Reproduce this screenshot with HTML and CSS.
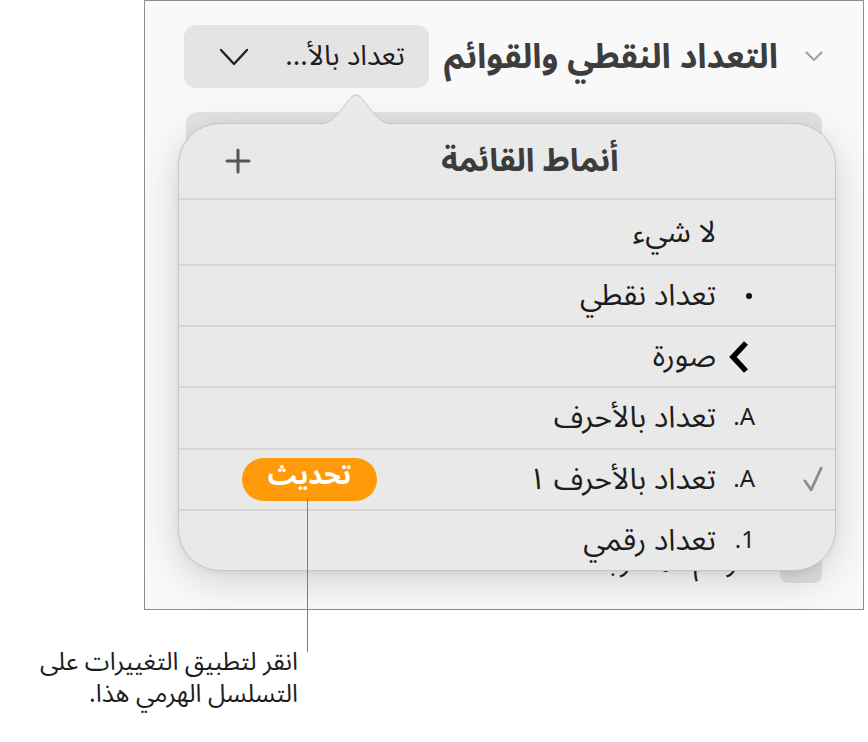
FILE: index.html
```html
<!DOCTYPE html>
<html lang="ar">
<head>
  <meta charset="UTF-8" />
  <title>أنماط القائمة</title>
  <link rel="stylesheet" href="styles.css">
</head>
<body>
  <div class="stage">
    <div class="frame">
      <div class="bar">
        <svg class="disclosure" viewBox="0 0 18 11"><polyline points="1.5,1.5 9,9 16.5,1.5" /></svg>
        <h2 class="bar-title">التعداد النقطي والقوائم</h2>
        <button class="style-pop">
          <span>تعداد بالأ...</span>
          <svg viewBox="0 0 30 18"><polyline points="2,2 15,16 28,2" /></svg>
        </button>
      </div>
      <div class="list-box"></div>
      <div class="tier-row">
        <span class="tier-box"></span>
        <span class="tier-label">الأرقام المتدرجة</span>
      </div>

      <div class="popover">
        <svg class="popover-arrow" viewBox="0 0 72 31"><path d="M0 30 C 18 30 27 1 36 1 C 45 1 54 30 72 30" /></svg>
        <div class="pop-head">
          <span></span>
          <span class="pop-title">أنماط القائمة</span>
          <svg class="add" viewBox="0 0 26 26"><path d="M13 2 V24 M2 13 H24" /></svg>
        </div>
        <ul class="styles">
          <li><span class="check"></span><span class="mark"></span><span class="name">لا شيء</span></li>
          <li><span class="check"></span><span class="mark"><i class="dot"></i></span><span class="name">تعداد نقطي</span></li>
          <li><span class="check"></span><span class="mark"><svg class="pic" viewBox="0 0 22 34"><polyline points="18,3 5,17 18,31" /></svg></span><span class="name">صورة</span></li>
          <li><span class="check"></span><span class="mark">A.</span><span class="name">تعداد بالأحرف</span></li>
          <li>
            <span class="check"><svg viewBox="0 0 22 28"><polyline points="2,16 9,26 20,2" /></svg></span>
            <span class="mark">A.</span><span class="name">تعداد بالأحرف ١</span>
            <button class="update">تحديث</button>
          </li>
          <li><span class="check"></span><span class="mark">1.</span><span class="name">تعداد رقمي</span></li>
        </ul>
      </div>
    </div>
    <span class="callout-line"></span>
    <p class="callout">انقر لتطبيق التغييرات على<br>التسلسل الهرمي هذا.</p>
  </div>
</body>
</html>
```

FILE: styles.css
```css
* { box-sizing: border-box; }
body {
  margin: 0;
  background: #fff;
  font-family: "Noto Sans Arabic", "DejaVu Sans", sans-serif;
  color: #1d1d1d;
}
.stage {
  position: relative;
  width: 868px;
  height: 742px;
}
.frame {
  position: relative;
  margin-left: 144px;
  width: 720px;
  height: 610px;
  border: 1px solid #8f8f8f;
  background: #f9f9f9;
  direction: rtl;
  padding: 24px 40px 0 0;
}
.bar {
  display: flex;
  align-items: center;
  height: 63px;
}
.disclosure {
  width: 18px;
  height: 11px;
  margin-left: 27px;
  fill: none;
  stroke: #a3a3a3;
  stroke-width: 2.2;
  stroke-linecap: round;
  stroke-linejoin: round;
}
.bar-title {
  margin: 0 0 0 15px;
  font-size: 34px;
  font-weight: 700;
  color: #3d3d3d;
}
.style-pop {
  width: 245px;
  height: 63px;
  border: 0;
  border-radius: 12px;
  background: #e4e4e4;
  display: flex;
  align-items: center;
  justify-content: space-between;
  padding: 0 24px 0 35px;
  font: inherit;
  font-size: 28px;
  color: #1d1d1d;
  direction: rtl;
}
.style-pop svg {
  width: 30px;
  height: 18px;
  fill: none;
  stroke: #222;
  stroke-width: 2.4;
  stroke-linecap: round;
  stroke-linejoin: round;
}
.list-box {
  height: 60px;
  margin: 24px 1px 0 41px;
  border-radius: 12px;
  background: #e3e3e3;
}
.tier-row {
  display: flex;
  align-items: flex-end;
  gap: 20px;
  margin: 371px 1px 0 0;
  height: 40px;
}
.tier-box {
  width: 42px;
  height: 40px;
  border-radius: 8px;
  background: #e1e1e1;
}
.tier-label {
  font-size: 28px;
  line-height: 40px;
}

/* popover */
.popover {
  position: absolute;
  left: 33px;
  top: 122px;
  width: 658px;
  height: 448px;
  border: 1px solid #c6c6c6;
  border-radius: 42px;
  background: #e9e9e9;
  box-shadow: 0 10px 40px rgba(0, 0, 0, 0.16), 0 2px 6px rgba(0, 0, 0, 0.06);
}
.popover-arrow {
  position: absolute;
  left: 141px;
  top: -30px;
  width: 72px;
  height: 31px;
  fill: #e9e9e9;
  stroke: #c6c6c6;
  stroke-width: 1;
}
.pop-head {
  display: grid;
  grid-template-columns: 1fr auto 1fr;
  align-items: center;
  height: 74px;
  padding-left: 46px;
}
.pop-title {
  font-size: 32px;
  font-weight: 700;
  color: #3c3c3c;
}
.add {
  justify-self: end;
  width: 26px;
  height: 26px;
  fill: none;
  stroke: #555;
  stroke-width: 3;
  stroke-linecap: round;
}
.styles {
  list-style: none;
  margin: 0;
  padding: 0;
}
.styles li {
  display: flex;
  align-items: center;
  height: 61.2px;
  border-top: 2px solid #d6d6d6;
  padding: 0 10px 0 63px;
}
.styles li:first-child {
  height: 66px;
}
.check {
  display: flex;
  justify-content: center;
  width: 24px;
}
.check svg {
  width: 20px;
  height: 26px;
  fill: none;
  stroke: #8c8c8c;
  stroke-width: 3;
  stroke-linecap: round;
  stroke-linejoin: round;
}
.mark {
  display: flex;
  align-items: center;
  width: 39px;
  margin-right: 46px;
  font-size: 24px;
}
.dot {
  width: 6px;
  height: 6px;
  margin-right: 3px;
  border-radius: 50%;
  background: #111;
}
.pic {
  width: 22px;
  height: 34px;
  margin-right: 5px;
  fill: none;
  stroke: #000;
  stroke-width: 5.5;
}
.name {
  font-size: 30px;
}
.update {
  margin-right: auto;
  width: 135px;
  height: 43px;
  border: 0;
  border-radius: 22px;
  padding: 0 0 8px;
  background: #ff9a0a;
  color: #fff;
  font: inherit;
  font-size: 27px;
  font-weight: 700;
  line-height: 1;
}

/* callout */
.callout-line {
  position: absolute;
  left: 307px;
  top: 498px;
  width: 1px;
  height: 154px;
  background: #7c7c7c;
}
.callout {
  margin: 36px 0 0;
  width: 298px;
  direction: rtl;
  font-size: 25px;
  line-height: 32px;
  color: #1d1d1d;
}
```
